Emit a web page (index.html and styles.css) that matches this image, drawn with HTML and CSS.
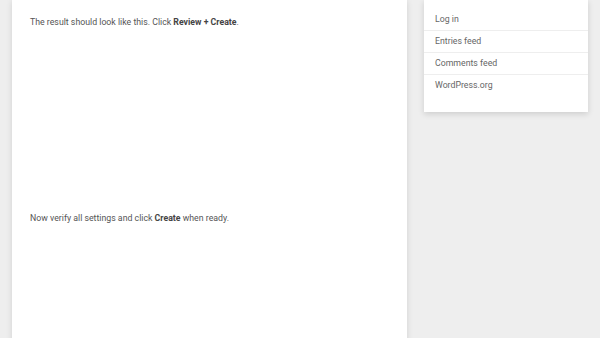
FILE: index.html
```html
<!DOCTYPE html>
<html>
<head>
<meta charset="utf-8">
<link rel="stylesheet" href="styles.css">
</head>
<body>
<div class="page">
  <main class="content">
    <p class="para">The result should look like this. Click <strong>Review + Create</strong>.</p>
    <div class="figure"></div>
    <p class="para">Now verify all settings and click <strong>Create</strong> when ready.</p>
    <div class="figure tall"></div>
  </main>
  <aside class="sidebar">
    <ul class="meta">
      <li class="meta-item">Log in</li>
      <li class="meta-item">Entries feed</li>
      <li class="meta-item">Comments feed</li>
      <li class="meta-item">WordPress.org</li>
    </ul>
  </aside>
</div>
</body>
</html>
```

FILE: styles.css
```css
html, body {
  margin: 0;
  padding: 0;
  background: #eeeeee;
  overflow: hidden;
  height: 338px;
}
body {
  font-family: Roboto, "Liberation Sans", sans-serif;
  color: #555555;
}
.page {
  display: flex;
  align-items: flex-start;
  gap: 17px;
  padding-left: 12px;
}
.content {
  width: 395px;
  height: 400px;
  background: #ffffff;
  box-shadow: 0 1px 6px rgba(0, 0, 0, 0.12);
  padding: 15px 18px 0;
  box-sizing: border-box;
}
.para {
  margin: 0;
  font-size: 8.75px;
  line-height: 14px;
}
.para strong {
  color: #444444;
  font-weight: 700;
}
.figure {
  height: 182px;
}
.sidebar {
  width: 164px;
  background: #ffffff;
  box-shadow: 0 2px 6px rgba(0, 0, 0, 0.14);
  padding: 9px 0 15px;
  height: 112px;
  box-sizing: border-box;
}
.meta {
  list-style: none;
  margin: 0;
  padding: 0;
}
.meta-item {
  font-size: 8.75px;
  line-height: 21px;
  padding: 0 11px;
  border-bottom: 1px solid #eeeeee;
  color: #666666;
}
.meta-item:last-child {
  border-bottom: none;
}
```
